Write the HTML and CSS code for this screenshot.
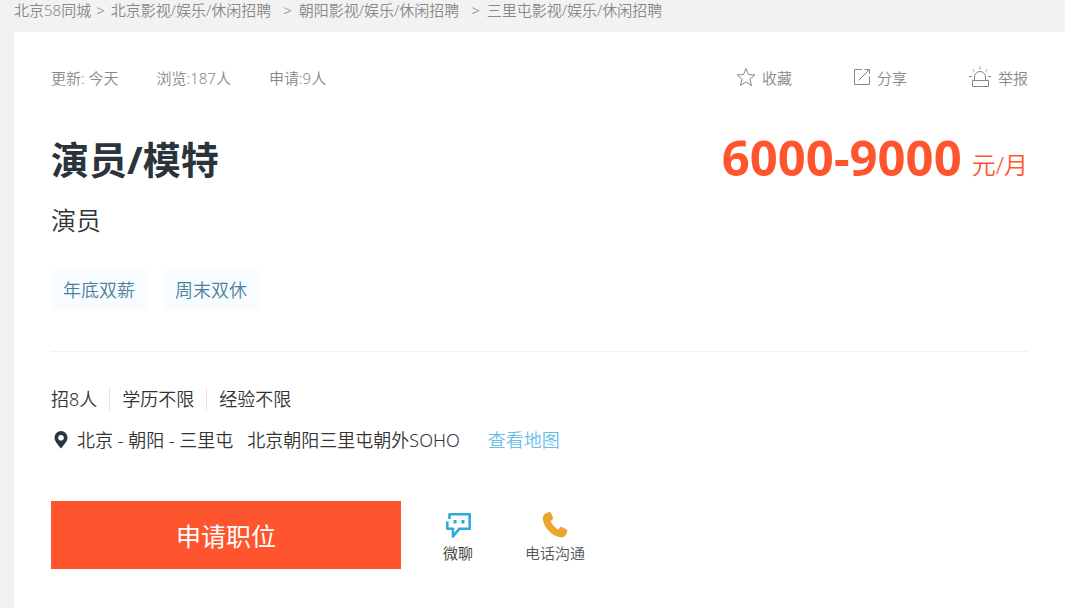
FILE: index.html
```html
<!DOCTYPE html>
<html lang="zh-CN">
<head>
<meta charset="utf-8">
<meta name="viewport" content="width=device-width, initial-scale=1">
<title>演员/模特</title>
<link rel="stylesheet" href="styles.css">
</head>
<body>
<nav class="crumbs" aria-label="位置">
  <a href="#">北京58同城</a><span class="sep first">&gt;</span>
  <a href="#">北京影视/娱乐/休闲招聘</a><span class="sep">&gt;</span>
  <a href="#">朝阳影视/娱乐/休闲招聘</a><span class="sep">&gt;</span>
  <a href="#">三里屯影视/娱乐/休闲招聘</a>
</nav>
<main class="job">
  <div class="topbar">
    <div class="stats">
      <span>更新: 今天</span>
      <span>浏览:187人</span>
      <span>申请:9人</span>
    </div>
    <div class="actions">
      <button class="action" type="button">
        <svg width="20" height="20" viewBox="0 0 20 20"><path d="M10 1.500l2.400 6 6.600.5-5.100 4.200 1.700 6.300L10 15l-5.600 3.500 1.700-6.300L1 8l6.600-.5z"/></svg>
        收藏
      </button>
      <button class="action" type="button">
        <svg width="18" height="18" viewBox="0 0 18 18"><path d="M9 1.500H1.500v15h15V8.500M5.500 12.500L16.500 1.500M11.500 1.500h5v4.500"/></svg>
        分享
      </button>
      <button class="action" type="button">
        <svg width="24" height="22" viewBox="0 0 24 22"><path d="M4.500 14.500h16v6h-16zM6.500 14.500v-3.500a5.500 5.500 0 0 1 11 0v3.500M12 .5v3M4.500 3.500l2 2M19.500 3.500l-2 2M1 10.500h3M20 10.500h3"/></svg>
        举报
      </button>
    </div>
  </div>
  <header class="heading">
    <h1>演员/模特</h1>
    <p class="salary"><strong>6000-9000</strong><span>元/月</span></p>
  </header>
  <p class="role">演员</p>
  <ul class="tags"><li>年底双薪</li><li>周末双休</li></ul>
  <ul class="needs"><li>招8人</li><li>学历不限</li><li>经验不限</li></ul>
  <div class="place">
    <svg width="14" height="18" viewBox="0 0 14 18"><path fill-rule="evenodd" d="M7 0a6.500 6.500 0 0 0-6.500 6.500C.5 10 3 12.500 7 17.500c4-5 6.500-7.500 6.500-11A6.500 6.500 0 0 0 7 0zm0 4a2.800 2.800 0 1 1 0 5.600A2.800 2.800 0 0 1 7 4z"/></svg>
    <span class="area">北京 - 朝阳 - 三里屯</span>
    <span>北京朝阳三里屯朝外SOHO</span>
    <a href="#">查看地图</a>
  </div>
  <div class="contact">
    <button class="apply" type="button">申请职位</button>
    <button class="channel chat" type="button">
      <svg width="28" height="28" viewBox="0 0 28 28"><path fill="none" stroke="#2eaadc" stroke-width="2.600" stroke-linejoin="round" d="M5.500 8V3.300h20.200v14.400H15.500L9 25.500v-7.800H3.300V10.500"/><path fill="#2eaadc" d="M9.500 9h3v3.500h-3zM17.500 9h3v3.500h-3z"/></svg>
      微聊
    </button>
    <button class="channel phone" type="button">
      <svg width="28" height="28" viewBox="0 0 28 28"><path fill="#eca630" d="M4.500 2.500L8 1c1-.3 1.500 0 2 1l2 4.500c.3 1 0 1.500-.5 2L9.500 10c1.500 3.500 4 6.500 7.500 8.500l2-2c.7-.7 1.300-.8 2-.4l4.500 2.400c1 .5 1.200 1.200.8 2L25 23.500c-1 2.300-3 3.200-5.500 2.800C11 25 3.500 17.500 2 9c-.5-3 .5-5.500 2.500-6.500z"/></svg>
      电话沟通
    </button>
  </div>
</main>
</body>
</html>
```
FILE: styles.css
```css
* {
  box-sizing: border-box;
}

body {
  margin: 0;
  min-height: 100vh;
  display: flex;
  flex-direction: column;
  background: #f2f2f2;
  color: #333;
  font-family: "Noto Sans", "Noto Sans CJK SC", sans-serif;
  font-weight: 350;
}

h1, p, ul {
  margin: 0;
  padding: 0;
}

ul {
  list-style: none;
}

a {
  color: inherit;
  text-decoration: none;
}

button {
  border: 0;
  padding: 0;
  background: none;
  color: inherit;
  font: inherit;
  cursor: pointer;
}

svg {
  flex: none;
}

.crumbs {
  display: flex;
  height: 32px;
  padding-left: 14px;
  color: #888;
  font-size: 15px;
  line-height: 20px;
  white-space: nowrap;
}

.sep {
  margin: 0 7px 0 12px;
}

.sep.first {
  margin: 0 6px 0 5px;
}

.job {
  flex: 1;
  margin-left: 14px;
  padding: 31px 37px;
  background: #fff;
}

.topbar {
  display: flex;
  justify-content: space-between;
  align-items: center;
  height: 28px;
  color: #888;
  font-size: 15px;
}

.stats {
  display: flex;
  gap: 38px;
}

.actions {
  display: flex;
  gap: 61px;
}

.action {
  display: flex;
  align-items: center;
  gap: 6px;
}

.action svg {
  fill: none;
  stroke: #888;
}

.heading {
  display: flex;
  justify-content: space-between;
  align-items: center;
  height: 72px;
  margin-top: 30px;
}

h1 {
  color: #2b343a;
  font-size: 38px;
  font-weight: 700;
}

.salary {
  display: flex;
  align-items: center;
  gap: 10px;
  color: #ff552e;
}

.salary strong {
  font-size: 49px;
  font-weight: 700;
}

.salary span {
  padding-top: 12px;
  font-size: 24px;
}

.role {
  margin-top: 9px;
  font-size: 25px;
  line-height: 36px;
}

.tags {
  display: flex;
  gap: 16px;
  padding: 32px 0 41px;
  border-bottom: 1px solid #f2f2f2;
}

.tags li {
  padding: 0 12px;
  background: #f6fcff;
  color: #4c7f99;
  font-size: 18px;
  line-height: 40px;
}

.needs {
  display: flex;
  align-items: center;
  margin-top: 35px;
  font-size: 18px;
  line-height: 24px;
}

.needs li + li {
  margin-left: 12px;
  padding-left: 12px;
  border-left: 1px solid #e6e6e6;
}

.place {
  display: flex;
  align-items: center;
  margin-top: 17px;
  padding-left: 3px;
  font-size: 18px;
  line-height: 24px;
}

.place svg {
  fill: #2b343a;
}

.area {
  margin: 0 14px 0 9px;
}

.place a {
  margin-left: 28px;
  color: #6bbce8;
}

.contact {
  display: flex;
  align-items: center;
  margin-top: 49px;
}

.apply {
  width: 350px;
  height: 68px;
  background: #ff552e;
  color: #fff;
  font-size: 25px;
  font-weight: 400;
}

.channel {
  display: flex;
  flex-direction: column;
  align-items: center;
  gap: 3px;
  padding-top: 4px;
  font-size: 15px;
  line-height: 22px;
}

.chat {
  margin-left: 42px;
}

.phone {
  margin-left: 52px;
  color: #555;
}
```
